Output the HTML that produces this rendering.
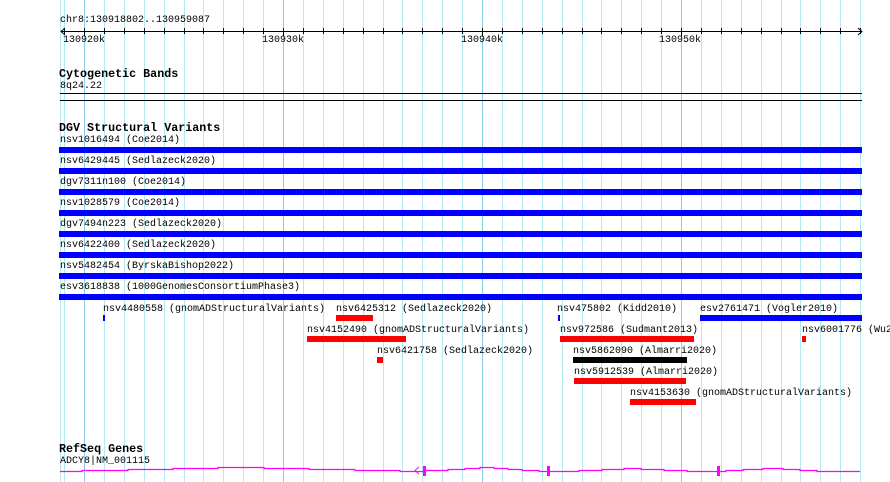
<!DOCTYPE html>
<html><head><meta charset="utf-8"><style>
html,body{margin:0;padding:0;width:890px;height:482px;overflow:hidden;background:#fff;position:relative}
.t{position:absolute;font-family:"Liberation Mono",monospace;font-size:10px;line-height:10px;white-space:nowrap;color:#000}
.h{position:absolute;font-family:"Liberation Mono",monospace;font-size:11.7px;line-height:12px;font-weight:bold;white-space:nowrap;color:#000}
.b{position:absolute;height:6px}
.bl{background:#0000ff}.rd{background:#ff0000}.bk{background:#000}
</style></head><body>
<svg width="890" height="482" style="position:absolute;left:0;top:0">
<g id="grid"></g>
<line x1="60.5" y1="0" x2="60.5" y2="482" stroke="#b3e9f0" stroke-width="1"/>
<g stroke="#000" stroke-width="1" fill="none">
<line x1="61" y1="31.5" x2="862" y2="31.5"/>
<polyline points="65,28 61,31.5 65,35"/>
<polyline points="858,28 862,31.5 858,35"/>
</g>
<g id="ticks" stroke="#000" stroke-width="1"></g>
<line x1="60" y1="93.5" x2="862" y2="93.5" stroke="#000"/>
<line x1="60" y1="100.5" x2="862" y2="100.5" stroke="#000"/>
<polyline fill="none" stroke="#ff00ff" stroke-width="1.2" points="60,471.5 82,471.5 82,470.5 128,470.5 128,469.5 173,469.5 173,468.5 218,468.5 218,467.5 264,467.5 264,468.5 309,468.5 309,469.5 355,469.5 355,470.5 400,470.5 400,471.5 417,471.5 M0,0"/>
<polyline fill="none" stroke="#ff00ff" stroke-width="1.2" points="426,471.5 426,470.5 448,470.5 448,469.5 465,469.5 465,468.5 480,468.5 480,467.5 494,467.5 494,468.5 508,468.5 508,469.5 522,469.5 522,470.5 539,470.5 539,471.5 579,471.5 579,470.5 602,470.5 602,469.5 624,469.5 624,468.5 641,468.5 641,469.5 664,469.5 664,470.5 687,470.5 687,471.5 726,471.5 726,470.5 743,470.5 743,469.5 763,469.5 763,468.5 783,468.5 783,469.5 800,469.5 800,470.5 817,470.5 817,471.5 860,471.5"/>
<line x1="417" y1="471.5" x2="426" y2="471.5" stroke="#ff00ff" stroke-width="1.2"/>
<polyline points="419,467 415,470.5 419,474" fill="none" stroke="#ff00ff" stroke-width="1"/>
<g fill="#ff00ff">
<rect x="423" y="466" width="3" height="10"/>
<rect x="547" y="466" width="3" height="10"/>
<rect x="717" y="466" width="3" height="10"/>
</g>
</svg>
<div class="t" style="left:60px;top:16px">chr8:130918802..130959087</div>
<div class="t" style="left:63px;top:36px">130920k</div>
<div class="t" style="left:262px;top:36px">130930k</div>
<div class="t" style="left:461px;top:36px">130940k</div>
<div class="t" style="left:659px;top:36px">130950k</div>
<div class="h" style="left:59px;top:68px">Cytogenetic Bands</div>
<div class="t" style="left:60px;top:82px">8q24.22</div>
<div class="h" style="left:59px;top:122px">DGV Structural Variants</div>
<div class="t" style="left:60px;top:136px">nsv1016494 (Coe2014)</div><div class="b bl" style="left:59px;width:803px;top:147px"></div>
<div class="t" style="left:60px;top:157px">nsv6429445 (Sedlazeck2020)</div><div class="b bl" style="left:59px;width:803px;top:168px"></div>
<div class="t" style="left:60px;top:178px">dgv7311n100 (Coe2014)</div><div class="b bl" style="left:59px;width:803px;top:189px"></div>
<div class="t" style="left:60px;top:199px">nsv1028579 (Coe2014)</div><div class="b bl" style="left:59px;width:803px;top:210px"></div>
<div class="t" style="left:60px;top:220px">dgv7494n223 (Sedlazeck2020)</div><div class="b bl" style="left:59px;width:803px;top:231px"></div>
<div class="t" style="left:60px;top:241px">nsv6422400 (Sedlazeck2020)</div><div class="b bl" style="left:59px;width:803px;top:252px"></div>
<div class="t" style="left:60px;top:262px">nsv5482454 (ByrskaBishop2022)</div><div class="b bl" style="left:59px;width:803px;top:273px"></div>
<div class="t" style="left:60px;top:283px">esv3618838 (1000GenomesConsortiumPhase3)</div><div class="b bl" style="left:59px;width:803px;top:294px"></div>

<div class="t" style="left:103px;top:305px">nsv4480558 (gnomADStructuralVariants)</div><div class="b bl" style="left:103px;width:2px;top:315px"></div>
<div class="t" style="left:336px;top:305px">nsv6425312 (Sedlazeck2020)</div><div class="b rd" style="left:336px;width:37px;top:315px"></div>
<div class="t" style="left:557px;top:305px">nsv475802 (Kidd2010)</div><div class="b bl" style="left:558px;width:2px;top:315px"></div>
<div class="t" style="left:700px;top:305px">esv2761471 (Vogler2010)</div><div class="b bl" style="left:700px;width:162px;top:315px"></div>
<div class="t" style="left:307px;top:326px">nsv4152490 (gnomADStructuralVariants)</div><div class="b rd" style="left:307px;width:99px;top:336px"></div>
<div class="t" style="left:560px;top:326px">nsv972586 (Sudmant2013)</div><div class="b rd" style="left:560px;width:134px;top:336px"></div>
<div class="t" style="left:802px;top:326px">nsv6001776 (Wu2021)</div><div class="b rd" style="left:802px;width:4px;top:336px"></div>
<div class="t" style="left:377px;top:347px">nsv6421758 (Sedlazeck2020)</div><div class="b rd" style="left:377px;width:6px;top:357px"></div>
<div class="t" style="left:573px;top:347px">nsv5862090 (Almarri2020)</div><div class="b bk" style="left:573px;width:114px;top:357px"></div>
<div class="t" style="left:574px;top:368px">nsv5912539 (Almarri2020)</div><div class="b rd" style="left:574px;width:112px;top:378px"></div>
<div class="t" style="left:630px;top:389px">nsv4153630 (gnomADStructuralVariants)</div><div class="b rd" style="left:630px;width:66px;top:399px"></div>

<div class="h" style="left:59px;top:443px">RefSeq Genes</div>
<div class="t" style="left:60px;top:457px">ADCY8|NM_001115</div>
<script>
var g=document.getElementById('grid'),s='',u='';
for(var k=-1;k<=39;k++){var x=Math.round(84+k*19.9)+0.5;var maj=(k%10===0);
s+='<line x1="'+x+'" y1="0" x2="'+x+'" y2="482" stroke="'+(maj?'#8ccbe9':'#b3e9f0')+'" stroke-width="1"/>';
u+='<line x1="'+x+'" y1="28" x2="'+x+'" y2="'+(maj?36:34)+'"/>';}
g.innerHTML=s;
document.getElementById('ticks').innerHTML=u;
</script>
</body></html>
